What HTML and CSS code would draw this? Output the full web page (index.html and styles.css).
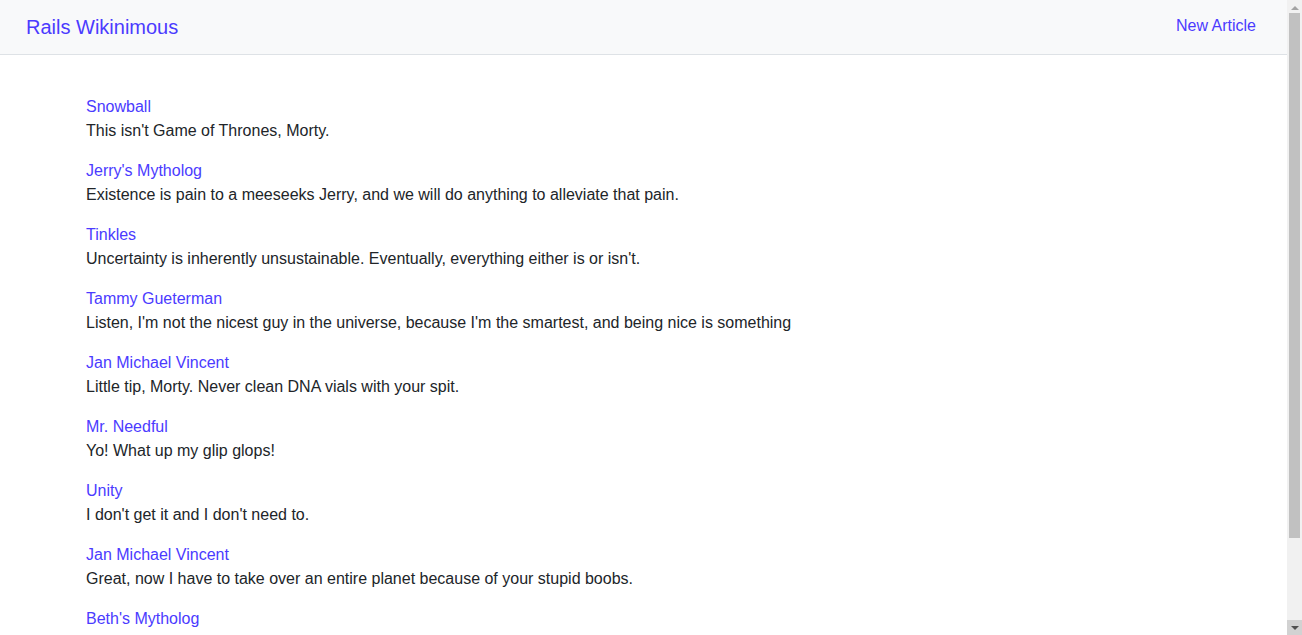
FILE: index.html
```html
<!DOCTYPE html>
<html lang="en">
<head>
<meta charset="utf-8">
<title>Rails Wikinimous</title>
<link rel="stylesheet" href="styles.css">
</head>
<body>
<div class="page">
  <nav class="navbar">
    <a class="brand" href="#">Rails Wikinimous</a>
    <a class="nav-link" href="#">New Article</a>
  </nav>
  <main class="articles">
    <div class="article"><a class="title" href="#">Snowball</a><p class="desc">This isn't Game of Thrones, Morty.</p></div>
    <div class="article"><a class="title" href="#">Jerry's Mytholog</a><p class="desc">Existence is pain to a meeseeks Jerry, and we will do anything to alleviate that pain.</p></div>
    <div class="article"><a class="title" href="#">Tinkles</a><p class="desc">Uncertainty is inherently unsustainable. Eventually, everything either is or isn't.</p></div>
    <div class="article"><a class="title" href="#">Tammy Gueterman</a><p class="desc">Listen, I'm not the nicest guy in the universe, because I'm the smartest, and being nice is something</p></div>
    <div class="article"><a class="title" href="#">Jan Michael Vincent</a><p class="desc">Little tip, Morty. Never clean DNA vials with your spit.</p></div>
    <div class="article"><a class="title" href="#">Mr. Needful</a><p class="desc">Yo! What up my glip glops!</p></div>
    <div class="article"><a class="title" href="#">Unity</a><p class="desc">I don't get it and I don't need to.</p></div>
    <div class="article"><a class="title" href="#">Jan Michael Vincent</a><p class="desc">Great, now I have to take over an entire planet because of your stupid boobs.</p></div>
    <div class="article last"><a class="title" href="#">Beth's Mytholog</a></div>
  </main>
</div>
<div class="scrollbar" aria-hidden="true">
  <div class="sb-btn sb-up"><span class="tri-up"></span></div>
  <div class="sb-track"><div class="sb-thumb"></div></div>
  <div class="sb-btn sb-down"><span class="tri-down"></span></div>
</div>
</body>
</html>
```

FILE: styles.css
```css
* { box-sizing: border-box; }
html, body {
  margin: 0;
  padding: 0;
  height: 100%;
  overflow: hidden;
}
body {
  display: flex;
  font-family: "Liberation Sans", Arial, sans-serif;
  font-size: 16px;
  line-height: 1.5;
  color: #212529;
  background: #fff;
}
a {
  color: #4b3bff;
  text-decoration: none;
}
.page {
  flex: 1;
  min-width: 0;
  height: 100%;
  overflow: hidden;
}
.navbar {
  height: 55px;
  display: flex;
  align-items: center;
  justify-content: space-between;
  padding: 0 31px 1px 26px;
  background: #f8f9fa;
  border-bottom: 1px solid #dee2e6;
}
.brand {
  font-size: 20px;
  line-height: 30px;
}
.nav-link {
  font-size: 16px;
  line-height: 24px;
  margin-bottom: 2px;
}
.articles {
  padding: 40px 86px 0;
}
.article {
  margin-bottom: 16px;
}
.article.last {
  margin-bottom: 0;
}
.title {
  display: block;
}
.desc {
  margin: 0;
}

/* scrollbar strip */
.scrollbar {
  width: 15px;
  flex: 0 0 15px;
  height: 100%;
  display: flex;
  flex-direction: column;
  background: #f1f1f1;
}
.sb-btn {
  height: 15px;
  flex: 0 0 15px;
  display: flex;
  align-items: center;
  justify-content: center;
}
.sb-down {
  background: #d2d2d2;
}
.sb-track {
  flex: 1;
  padding: 0 2px;
}
.sb-thumb {
  height: 525px;
  margin-top: -2px;
  background: #c1c1c1;
}
.tri-up {
  width: 0;
  height: 0;
  border-left: 4px solid transparent;
  border-right: 4px solid transparent;
  border-bottom: 4px solid #a3a3a3;
}
.tri-down {
  width: 0;
  height: 0;
  border-left: 4px solid transparent;
  border-right: 4px solid transparent;
  border-top: 4px solid #505050;
}
```
